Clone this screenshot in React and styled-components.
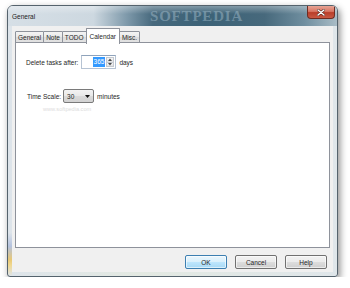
import styled, { createGlobalStyle } from "styled-components";

const GlobalStyle = createGlobalStyle`
  html, body {
    margin: 0;
    padding: 0;
    background: #ffffff;
  }
  body {
    font-family: "Liberation Sans", Arial, sans-serif;
    font-size: 6.5px;
    color: #262626;
  }
`;

const tabs = ["General", "Note", "TODO", "Calendar", "Misc."];

const App = () => {
  return (
    <>
      <GlobalStyle />
      <Window>
        <TitleBar>
          <Caption>General</Caption>
          <Brand>SOFTPEDIA</Brand>
          <CloseButton>
            <svg width="8" height="7" viewBox="0 0 8 7">
              <path
                d="M1 1 L7 6 M7 1 L1 6"
                stroke="#5a2a22"
                strokeWidth="2.6"
                strokeLinecap="round"
              />
              <path
                d="M1 1 L7 6 M7 1 L1 6"
                stroke="#ffffff"
                strokeWidth="1.4"
                strokeLinecap="round"
              />
            </svg>
          </CloseButton>
        </TitleBar>
        <Client>
          <TabRow>
            {tabs.map((t) => (
              <Tab key={t} $active={t === "Calendar"}>
                {t}
              </Tab>
            ))}
          </TabRow>
          <Panel>
            <FieldRow>
              <Label>Delete tasks after:</Label>
              <SpinBox>
                <SpinText>
                  <Selected>365</Selected>
                </SpinText>
                <SpinButtons>
                  <SpinButton>
                    <svg width="4" height="3" viewBox="0 0 4 3">
                      <path d="M0 3 L2 0.5 L4 3 Z" fill="#4a4a4a" />
                    </svg>
                  </SpinButton>
                  <SpinButton>
                    <svg width="4" height="3" viewBox="0 0 4 3">
                      <path d="M0 0 L2 2.5 L4 0 Z" fill="#4a4a4a" />
                    </svg>
                  </SpinButton>
                </SpinButtons>
              </SpinBox>
              <Unit>days</Unit>
            </FieldRow>
            <FieldRow $gap>
              <Label $tight>Time Scale:</Label>
              <Combo>
                <span>30</span>
                <svg width="5" height="3" viewBox="0 0 5 3">
                  <path d="M0 0 L5 0 L2.5 3 Z" fill="#111" />
                </svg>
              </Combo>
              <Unit>minutes</Unit>
            </FieldRow>
            <Watermark>www.softpedia.com</Watermark>
          </Panel>
          <ButtonRow>
            <Button $primary>OK</Button>
            <Button>Cancel</Button>
            <Button>Help</Button>
          </ButtonRow>
        </Client>
      </Window>
    </>
  );
};

const Window = styled.div`
  margin: 5px 0 0 7px;
  width: 331px;
  height: 272px;
  box-sizing: border-box;
  display: flex;
  flex-direction: column;
  border: 1px solid #55636d;
  border-radius: 6px 6px 3px 3px;
  background:
    linear-gradient(
        to bottom,
        transparent 0%,
        transparent 84%,
        #b4c2de 89%,
        #e9c874 94%,
        #f0d890 96%,
        transparent 100%
      )
      left top / 4px 100% no-repeat,
    linear-gradient(to right, #dde4ea 0%, #e3e9e2 40%, #dfe6ea 100%);
  box-shadow: 2px 3px 7px rgba(0, 0, 0, 0.45);
  overflow: hidden;
`;

const TitleBar = styled.div`
  position: relative;
  height: 20px;
  flex-shrink: 0;
  display: flex;
  align-items: flex-start;
  justify-content: space-between;
  padding: 0 2px 0 4px;
  background:
    linear-gradient(to bottom, rgba(255, 255, 255, 0.35), rgba(255, 255, 255, 0) 40%),
    linear-gradient(
      to right,
      #d6dfe6 0%,
      #cdd8e0 26%,
      #7f9aab 36%,
      #47697d 44%,
      #3c6277 60%,
      #47697c 78%,
      #6f8e9f 90%,
      #a9bcc6 100%
    );
`;

const Caption = styled.div`
  align-self: center;
  font-size: 6.5px;
  color: #1b1b1b;
`;

const Brand = styled.div`
  position: absolute;
  left: 142px;
  top: 3px;
  font-family: "Liberation Serif", "Times New Roman", serif;
  font-weight: bold;
  font-size: 15px;
  letter-spacing: 0.8px;
  color: rgba(170, 195, 210, 0.45);
  line-height: 15px;
`;

const CloseButton = styled.div`
  width: 28px;
  height: 13px;
  box-sizing: border-box;
  display: flex;
  align-items: center;
  justify-content: center;
  border: 1px solid #6e2c22;
  border-top: none;
  border-radius: 0 0 4px 4px;
  background: linear-gradient(
    to bottom,
    #e7a495 0%,
    #d87563 45%,
    #b93e2a 55%,
    #c85843 100%
  );
`;

const Client = styled.div`
  flex: 1;
  margin: 0 4px 4px;
  background: #f0f0f0;
  padding: 1px 3px 0;
  display: flex;
  flex-direction: column;
`;

const TabRow = styled.div`
  display: flex;
  align-items: flex-end;
  height: 16px;
  position: relative;
  z-index: 1;
`;

const Tab = styled.div`
  box-sizing: border-box;
  height: ${(p) => (p.$active ? "16px" : "12px")};
  margin-bottom: ${(p) => (p.$active ? "-1px" : "0")};
  margin-left: -1px;
  padding: ${(p) => (p.$active ? "0 3px" : "0 2px")};
  display: flex;
  align-items: center;
  border: 1px solid #8e929b;
  border-bottom: ${(p) => (p.$active ? "none" : "1px solid #8e929b")};
  border-radius: 1px 1px 0 0;
  background: ${(p) =>
    p.$active
      ? "#ffffff"
      : "linear-gradient(to bottom, #f4f4f4 0%, #e9e9e9 50%, #dcdcdc 51%, #e2e2e2 100%)"};
  white-space: nowrap;

  &:first-child {
    margin-left: 0;
  }
`;

const Panel = styled.div`
  position: relative;
  box-sizing: border-box;
  height: 206px;
  margin-top: -1px;
  background: #ffffff;
  border: 1px solid #8e929b;
  padding: 12px 10px;
`;

const FieldRow = styled.div`
  display: flex;
  align-items: center;
  height: 14px;
  margin-top: ${(p) => (p.$gap ? "20px" : "0")};
`;

const Label = styled.span`
  margin-right: ${(p) => (p.$tight ? "2px" : "3px")};
  padding-left: ${(p) => (p.$tight ? "1px" : "0")};
`;

const Unit = styled.span`
  margin-left: 3px;
`;

const SpinBox = styled.div`
  box-sizing: border-box;
  width: 35px;
  height: 14px;
  display: flex;
  align-items: center;
  border: 1px solid #b6c3d3;
  border-top-color: #8fa3bb;
  background: #ffffff;
  padding: 1px;
`;

const SpinText = styled.div`
  flex: 1;
  display: flex;
  justify-content: flex-end;
  padding-right: 1px;
`;

const Selected = styled.span`
  background: #3399ff;
  color: #ffffff;
  padding: 1px 1px;
  line-height: 8px;
`;

const SpinButtons = styled.div`
  width: 8px;
  height: 10px;
  display: flex;
  flex-direction: column;
`;

const SpinButton = styled.div`
  flex: 1;
  box-sizing: border-box;
  display: flex;
  align-items: center;
  justify-content: center;
  border: 1px solid #c5c9cf;
  background: linear-gradient(to bottom, #f6f6f6, #e2e2e2);
  & + & {
    border-top: none;
  }
`;

const Combo = styled.div`
  box-sizing: border-box;
  width: 31px;
  height: 14px;
  display: flex;
  align-items: center;
  justify-content: space-between;
  padding: 0 3px;
  border: 1px solid #7a7a7a;
  border-radius: 2px;
  background: linear-gradient(
    to bottom,
    #f3f3f3 0%,
    #e8e8e8 50%,
    #dadada 51%,
    #d2d2d2 100%
  );
`;

const Watermark = styled.div`
  position: absolute;
  left: 27px;
  top: 63px;
  font-size: 5.6px;
  color: #dcdcdc;
`;

const ButtonRow = styled.div`
  display: flex;
  justify-content: flex-end;
  gap: 8px;
  margin-top: 7px;
  padding-right: 3px;
`;

const Button = styled.div`
  box-sizing: border-box;
  width: 42px;
  height: 14px;
  display: flex;
  align-items: center;
  justify-content: center;
  border: 1px solid ${(p) => (p.$primary ? "#3c7fb1" : "#707070")};
  border-radius: 2px;
  background: ${(p) =>
    p.$primary
      ? "linear-gradient(to bottom, #eaf6fd 0%, #d9f0fc 50%, #bee6fd 51%, #a7d9f5 100%)"
      : "linear-gradient(to bottom, #f2f2f2 0%, #ebebeb 50%, #dddddd 51%, #cfcfcf 100%)"};
  box-shadow: inset 0 0 0 1px rgba(255, 255, 255, 0.6);
`;

export default App;
